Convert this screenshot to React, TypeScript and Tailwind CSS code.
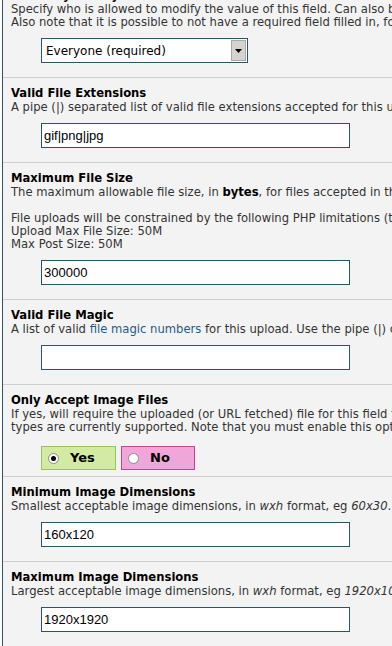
import React from "react";

const desc = "text-[11.6px] leading-[13px] text-[#333]";
const title = "text-[11.6px] leading-[15px] font-bold text-black";
const inputCls =
  "block w-[309px] h-[25px] border border-[#2c5466] bg-white px-[2px] text-[13px] text-black outline-none [font-family:'Liberation_Sans',Arial,sans-serif]";

function Section({ children }: { children: React.ReactNode }) {
  return (
    <div className="border-t border-[#cfcfcf] pl-[8px] pt-[8px]">{children}</div>
  );
}

function TextInput({ value }: { value: string }) {
  return (
    <div className="pl-[30px] pt-[9px] pb-[14px]">
      <input className={inputCls} defaultValue={value} readOnly />
    </div>
  );
}

export default function App() {
  return (
    <div className="w-[392px] h-[646px] overflow-hidden bg-white pl-[2px] [font-family:'DejaVu_Sans',Verdana,sans-serif]">
      <div className="h-[680px] border-l border-[#2c5466] bg-[#f3f3f3] -mt-[12px]">
        {/* top section (partially cut off) */}
        <div className="pl-[8px]">
          <div className={title}>Who May Modify</div>
          <div className={desc + " whitespace-nowrap"}>
            Specify who is allowed to modify the value of this field. Can also be used to hide it.
          </div>
          <div className={desc + " whitespace-nowrap"}>
            Also note that it is possible to not have a required field filled in, for example.
          </div>
          <div className="pl-[30px] pt-[9px] pb-[14px]">
            <div className="flex h-[25px] w-[207px] items-center border border-[#2c5466] bg-white">
              <span className="flex-1 pl-[4px] text-[12px] text-black">Everyone (required)</span>
              <span className="mr-[1px] flex h-[21px] w-[15px] items-center justify-center border border-[#a8a8a8] bg-[#d6d3ce]">
                <svg width="7" height="4" viewBox="0 0 7 4">
                  <path d="M0 0h7L3.5 4z" fill="#000" />
                </svg>
              </span>
            </div>
          </div>
        </div>

        <Section>
          <div className={title}>Valid File Extensions</div>
          <div className={desc + " whitespace-nowrap"}>
            A pipe (|) separated list of valid file extensions accepted for this upload.
          </div>
          <TextInput value="gif|png|jpg" />
        </Section>

        <Section>
          <div className={title}>Maximum File Size</div>
          <div className={desc + " whitespace-nowrap"}>
            The maximum allowable file size, in <b className="text-black">bytes</b>, for files accepted in this field.
          </div>
          <div className={desc + " whitespace-nowrap mt-[13px]"}>
            File uploads will be constrained by the following PHP limitations (these cannot be changed here):
          </div>
          <div className={desc}>Upload Max File Size: 50M</div>
          <div className={desc}>Max Post Size: 50M</div>
          <TextInput value="300000" />
        </Section>

        <Section>
          <div className={title}>Valid File Magic</div>
          <div className={desc + " whitespace-nowrap"}>
            A list of valid <span className="text-[#1f5b84]">file magic numbers</span> for this upload. Use the pipe (|) character.
          </div>
          <TextInput value="" />
        </Section>

        <Section>
          <div className={title}>Only Accept Image Files</div>
          <div className={desc + " whitespace-nowrap"}>
            If yes, will require the uploaded (or URL fetched) file for this field to be an image.
          </div>
          <div className={desc + " whitespace-nowrap"}>
            types are currently supported. Note that you must enable this option.
          </div>
          <div className="flex gap-[5px] pl-[30px] pt-[12px] pb-[6px]">
            <label className="flex h-[24px] w-[75px] items-center border border-[#9cc35a] bg-[#d3eaa4] pl-[6px]">
              <span className="flex h-[11px] w-[11px] items-center justify-center rounded-full border border-[#8a8a8a] bg-white">
                <span className="h-[5px] w-[5px] rounded-full bg-black" />
              </span>
              <span className="ml-[11px] text-[13px] font-bold text-black">Yes</span>
            </label>
            <label className="flex h-[24px] w-[74px] items-center border border-[#c2458f] bg-[#efa6d9] pl-[6px]">
              <span className="h-[11px] w-[11px] rounded-full border border-[#8a8a8a] bg-white" />
              <span className="ml-[11px] text-[13px] font-bold text-black">No</span>
            </label>
          </div>
        </Section>

        <Section>
          <div className={title}>Minimum Image Dimensions</div>
          <div className={desc + " whitespace-nowrap"}>
            Smallest acceptable image dimensions, in <i>wxh</i> format, eg <i>60x30</i>.
          </div>
          <TextInput value="160x120" />
        </Section>

        <Section>
          <div className={title}>Maximum Image Dimensions</div>
          <div className={desc + " whitespace-nowrap"}>
            Largest acceptable image dimensions, in <i>wxh</i> format, eg <i>1920x1080</i>.
          </div>
          <TextInput value="1920x1920" />
        </Section>
      </div>
    </div>
  );
}
